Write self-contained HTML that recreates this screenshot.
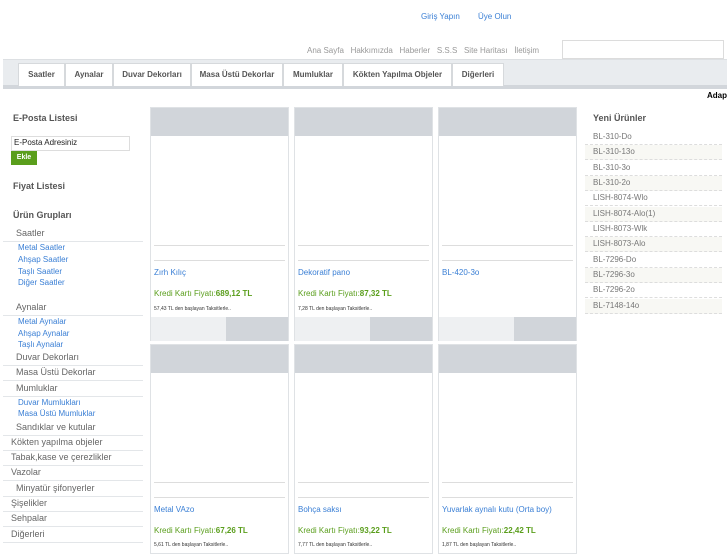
<!DOCTYPE html><html><head><meta charset="utf-8"><style>
*{margin:0;padding:0;box-sizing:border-box}
body{width:727px;height:545px;overflow:hidden;background:#fff;font-family:"Liberation Sans",sans-serif;position:relative;font-size:9px}
.a{position:absolute;white-space:nowrap}
.blue{color:#3a7fd5}
.tab{position:absolute;top:63px;height:23px;background:#fff;border:1px solid #d6d9dc;border-bottom:none;font-size:8px;font-weight:bold;color:#555;text-align:center;line-height:22px}
.card{position:absolute;width:139px;background:#fff;border:1px solid #dfe2e5}
.card .top{height:28px;background:#d1d5da}
.sb{position:absolute;left:3px;width:140px;border-bottom:1px solid #e3e6e9;font-size:9px;color:#666;height:15px;line-height:13px}
.sub{position:absolute;left:18px;font-size:8px;color:#3a7fd5}
.yr{position:absolute;left:585px;width:137px;height:15.3px;border-bottom:1px dashed #ddd;font-size:8px;color:#777;padding-left:8px;line-height:14px}
</style></head><body>
<div class="a blue" style="left:421px;top:12px;font-size:8px">Giriş Yapın</div>
<div class="a blue" style="left:478px;top:12px;font-size:8px">Üye Olun</div>
<div class="a" style="left:307px;top:46px;font-size:8px;color:#999;word-spacing:0">Ana Sayfa&nbsp;&nbsp; Hakkımızda&nbsp;&nbsp; Haberler&nbsp;&nbsp; S.S.S&nbsp;&nbsp; Site Haritası&nbsp;&nbsp; İletişim</div>
<div class="a" style="left:562px;top:40px;width:162px;height:19px;border:1px solid #dcdcdc"></div>
<div class="a" style="left:3px;top:59px;width:724px;height:30px;background:#e9ecef;border-top:1px solid #dde0e3"></div>
<div class="a" style="left:3px;top:85px;width:724px;height:4px;background:#d2d6db"></div>
<div class="tab" style="left:18px;width:47px">Saatler</div>
<div class="tab" style="left:65px;width:48px">Aynalar</div>
<div class="tab" style="left:113px;width:78px">Duvar Dekorları</div>
<div class="tab" style="left:191px;width:92px">Masa Üstü Dekorlar</div>
<div class="tab" style="left:283px;width:60px">Mumluklar</div>
<div class="tab" style="left:343px;width:109px">Kökten Yapılma Objeler</div>
<div class="tab" style="left:452px;width:52px">Diğerleri</div>
<div class="a" style="left:707px;top:91px;font-size:8px;font-weight:bold;color:#000">Adap</div>

<div class="a" style="left:13px;top:113px;font-weight:bold;color:#555">E-Posta Listesi</div>
<div class="a" style="left:11px;top:136px;width:119px;height:15px;border:1px solid #ddd;font-size:8px;padding:1px 2px;color:#222">E-Posta Adresiniz</div>
<div class="a" style="left:11px;top:151px;width:26px;height:14px;background:#5a9e1c;color:#fff;font-size:7px;font-weight:bold;text-align:center;line-height:14px">Ekle</div>
<div class="a" style="left:13px;top:181px;font-weight:bold;color:#555">Fiyat Listesi</div>
<div class="a" style="left:13px;top:210px;font-weight:bold;color:#555">Ürün Grupları</div>
<div class="sb" style="top:227px;padding-left:13px">Saatler</div>
<div class="sub" style="top:243px">Metal Saatler</div>
<div class="sub" style="top:255px">Ahşap Saatler</div>
<div class="sub" style="top:267px">Taşlı Saatler</div>
<div class="sub" style="top:278px">Diğer Saatler</div>
<div class="sb" style="top:301px;padding-left:13px">Aynalar</div>
<div class="sub" style="top:317px">Metal Aynalar</div>
<div class="sub" style="top:329px">Ahşap Aynalar</div>
<div class="sub" style="top:340px">Taşlı Aynalar</div>
<div class="sb" style="top:351px;padding-left:13px">Duvar Dekorları</div>
<div class="sb" style="top:366px;padding-left:13px">Masa Üstü Dekorlar</div>
<div class="sb" style="top:382px;padding-left:13px">Mumluklar</div>
<div class="sub" style="top:398px">Duvar Mumlukları</div>
<div class="sub" style="top:409px">Masa Üstü Mumluklar</div>
<div class="sb" style="top:421px;padding-left:13px">Sandıklar ve kutular</div>
<div class="sb" style="top:436px;padding-left:8px">Kökten yapılma objeler</div>
<div class="sb" style="top:451px;padding-left:8px">Tabak,kase ve çerezlikler</div>
<div class="sb" style="top:466px;padding-left:8px">Vazolar</div>
<div class="sb" style="top:482px;padding-left:13px">Minyatür şifonyerler</div>
<div class="sb" style="top:497px;padding-left:8px">Şişelikler</div>
<div class="sb" style="top:512px;padding-left:8px">Sehpalar</div>
<div class="sb" style="top:528px;padding-left:8px">Diğerleri</div>

<!-- cards row 1 -->
<div class="card" style="left:150px;top:107px;height:234px"><div class="top"></div>
<div class="a" style="left:3px;top:137px;width:131px;border-top:1px solid #ddd"></div>
<div class="a" style="left:3px;top:152px;width:131px;border-top:1px solid #ddd"></div>
<div class="a blue" style="left:3px;top:160px;font-size:8px">Zırh Kılıç</div>
<div class="a" style="left:3px;top:181px;font-size:8px;color:#5a9e1c">Kredi Kartı Fiyatı:<b>689,12 TL</b></div>
<div class="a" style="left:3px;top:198px;font-size:5px;color:#333">57,43 TL den başlayan Taksitlerle..</div>
<div class="a" style="left:0;top:209px;width:75px;height:24px;background:#eef0f2"></div>
<div class="a" style="left:75px;top:209px;width:62px;height:24px;background:#d1d5da"></div></div>
<div class="card" style="left:294px;top:107px;height:234px"><div class="top"></div>
<div class="a" style="left:3px;top:137px;width:131px;border-top:1px solid #ddd"></div>
<div class="a" style="left:3px;top:152px;width:131px;border-top:1px solid #ddd"></div>
<div class="a blue" style="left:3px;top:160px;font-size:8px">Dekoratif pano</div>
<div class="a" style="left:3px;top:181px;font-size:8px;color:#5a9e1c">Kredi Kartı Fiyatı:<b>87,32 TL</b></div>
<div class="a" style="left:3px;top:198px;font-size:5px;color:#333">7,28 TL den başlayan Taksitlerle..</div>
<div class="a" style="left:0;top:209px;width:75px;height:24px;background:#eef0f2"></div>
<div class="a" style="left:75px;top:209px;width:62px;height:24px;background:#d1d5da"></div></div>
<div class="card" style="left:438px;top:107px;height:234px"><div class="top"></div>
<div class="a" style="left:3px;top:137px;width:131px;border-top:1px solid #ddd"></div>
<div class="a" style="left:3px;top:152px;width:131px;border-top:1px solid #ddd"></div>
<div class="a blue" style="left:3px;top:160px;font-size:8px">BL-420-3o</div>
<div class="a" style="left:0;top:209px;width:75px;height:24px;background:#eef0f2"></div>
<div class="a" style="left:75px;top:209px;width:62px;height:24px;background:#d1d5da"></div></div>
<!-- row 2 -->
<div class="card" style="left:150px;top:344px;height:210px"><div class="top"></div>
<div class="a" style="left:3px;top:137px;width:131px;border-top:1px solid #ddd"></div>
<div class="a" style="left:3px;top:152px;width:131px;border-top:1px solid #ddd"></div>
<div class="a blue" style="left:3px;top:160px;font-size:8px">Metal VAzo</div>
<div class="a" style="left:3px;top:181px;font-size:8px;color:#5a9e1c">Kredi Kartı Fiyatı:<b>67,26 TL</b></div>
<div class="a" style="left:3px;top:197px;font-size:5px;color:#333">5,61 TL den başlayan Taksitlerle..</div></div>
<div class="card" style="left:294px;top:344px;height:210px"><div class="top"></div>
<div class="a" style="left:3px;top:137px;width:131px;border-top:1px solid #ddd"></div>
<div class="a" style="left:3px;top:152px;width:131px;border-top:1px solid #ddd"></div>
<div class="a blue" style="left:3px;top:160px;font-size:8px">Bohça saksı</div>
<div class="a" style="left:3px;top:181px;font-size:8px;color:#5a9e1c">Kredi Kartı Fiyatı:<b>93,22 TL</b></div>
<div class="a" style="left:3px;top:197px;font-size:5px;color:#333">7,77 TL den başlayan Taksitlerle..</div></div>
<div class="card" style="left:438px;top:344px;height:210px"><div class="top"></div>
<div class="a" style="left:3px;top:137px;width:131px;border-top:1px solid #ddd"></div>
<div class="a" style="left:3px;top:152px;width:131px;border-top:1px solid #ddd"></div>
<div class="a blue" style="left:3px;top:160px;font-size:8px">Yuvarlak aynalı kutu (Orta boy)</div>
<div class="a" style="left:3px;top:181px;font-size:8px;color:#5a9e1c">Kredi Kartı Fiyatı:<b>22,42 TL</b></div>
<div class="a" style="left:3px;top:197px;font-size:5px;color:#333">1,87 TL den başlayan Taksitlerle..</div></div>

<div class="a" style="left:593px;top:113px;font-weight:bold;color:#555;font-size:9px">Yeni Ürünler</div>
<div class="yr" style="top:130px">BL-310-Do</div>
<div class="yr" style="top:145px;background:#f8f8f4">BL-310-13o</div>
<div class="yr" style="top:161px">BL-310-3o</div>
<div class="yr" style="top:176px;background:#f8f8f4">BL-310-2o</div>
<div class="yr" style="top:191px">LISH-8074-Wlo</div>
<div class="yr" style="top:207px;background:#f8f8f4">LISH-8074-Alo(1)</div>
<div class="yr" style="top:222px">LISH-8073-Wlk</div>
<div class="yr" style="top:237px;background:#f8f8f4">LISH-8073-Alo</div>
<div class="yr" style="top:253px">BL-7296-Do</div>
<div class="yr" style="top:268px;background:#f8f8f4">BL-7296-3o</div>
<div class="yr" style="top:283px">BL-7296-2o</div>
<div class="yr" style="top:299px;background:#f8f8f4">BL-7148-14o</div>
</body></html>
